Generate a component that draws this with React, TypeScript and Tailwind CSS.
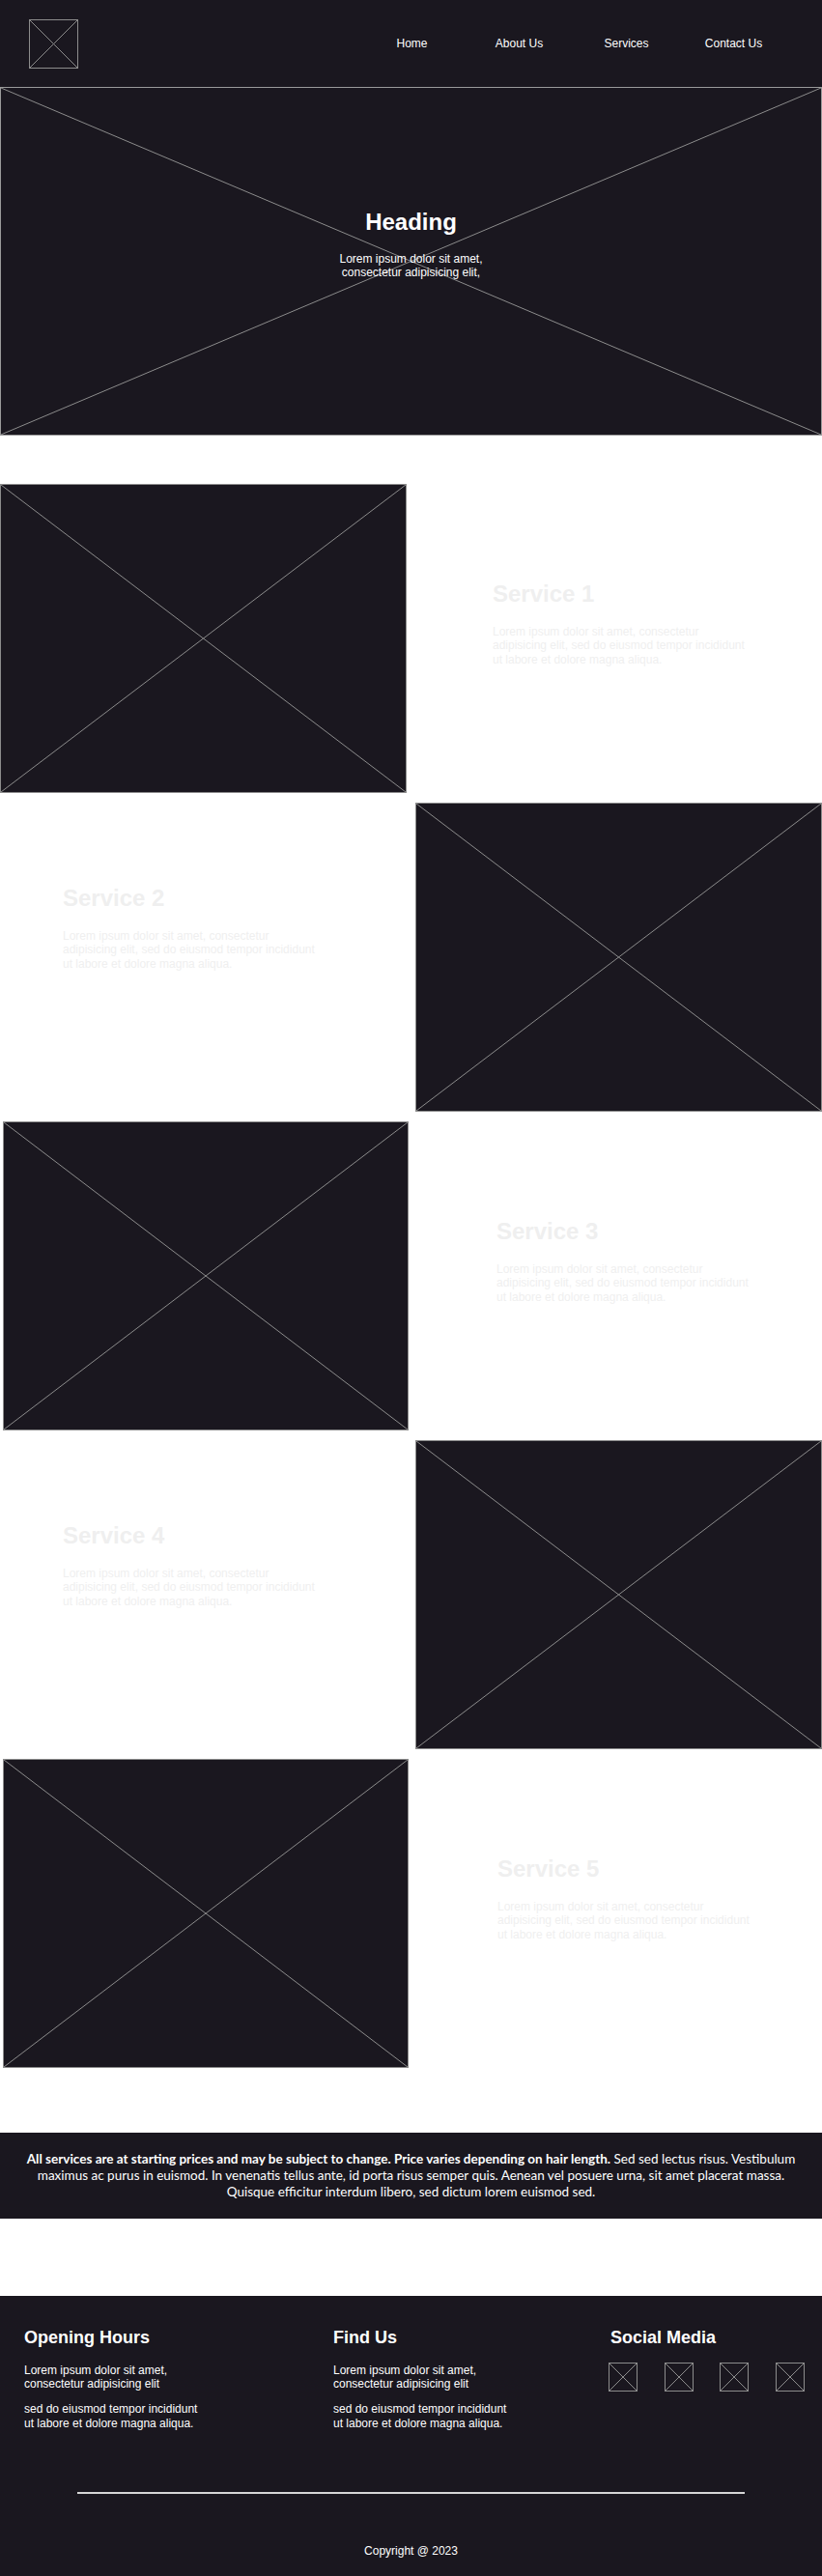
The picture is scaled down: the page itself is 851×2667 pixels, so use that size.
const services = [
  { title: "Service 1", side: "left", offset: "ml-0 w-[421px]", textPad: "pl-[89px] pt-[100px]" },
  { title: "Service 2", side: "right", offset: "w-[421px]", textPad: "pl-[65px] pt-[85px]" },
  { title: "Service 3", side: "left", offset: "ml-[3px] w-[420px]", textPad: "pl-[91px] pt-[100px]" },
  { title: "Service 4", side: "right", offset: "w-[421px]", textPad: "pl-[65px] pt-[85px]" },
  { title: "Service 5", side: "left", offset: "ml-[3px] w-[420px]", textPad: "pl-[92px] pt-[100px]" },
];

function Cross({ color = "#8c8c8c" }: { color?: string }) {
  return (
    <svg
      className="absolute inset-0 h-full w-full"
      viewBox="0 0 100 100"
      preserveAspectRatio="none"
    >
      <line x1="0" y1="0" x2="100" y2="100" stroke={color} strokeWidth="1" vectorEffect="non-scaling-stroke" />
      <line x1="100" y1="0" x2="0" y2="100" stroke={color} strokeWidth="1" vectorEffect="non-scaling-stroke" />
    </svg>
  );
}

function Placeholder({ className = "" }: { className?: string }) {
  return (
    <div className={"relative shrink-0 border border-[#8c8c8c] bg-[#1a171f] " + className}>
      <Cross />
    </div>
  );
}

function Header() {
  return (
    <div className="flex h-[90px] items-center justify-between bg-[#1a171f] pl-[30px] pr-[36px]">
      <Placeholder className="h-[51px] w-[51px]" />
      <nav className="flex text-[12px] text-white">
        <a className="w-[111px] text-center">Home</a>
        <a className="w-[111px] text-center">About Us</a>
        <a className="w-[111px] text-center">Services</a>
        <a className="w-[111px] text-center">Contact Us</a>
      </nav>
    </div>
  );
}

function Hero() {
  return (
    <div className="relative h-[361px] border border-[#9a9a9a] bg-[#1a171f]">
      <Cross />
      <div className="relative flex flex-col items-center pt-[125px] text-white">
        <h1 className="text-[24px] font-bold">Heading</h1>
        <p className="mt-[16px] text-center text-[12px]">
          Lorem ipsum dolor sit amet,
          <br />
          consectetur adipisicing elit,
        </p>
      </div>
    </div>
  );
}

function ServiceText({ title, pad }: { title: string; pad: string }) {
  return (
    <div className={"flex-1 " + pad}>
      <h2 className="text-[24px] font-bold text-[#efefef]">{title}</h2>
      <p className="mt-[17px] w-[268px] text-[12px] text-[#efefef]">
        Lorem ipsum dolor sit amet, consectetur adipisicing elit, sed do eiusmod tempor incididunt
        ut labore et dolore magna aliqua.
      </p>
    </div>
  );
}

function Services() {
  return (
    <div className="mt-[50px] flex flex-col gap-[10px]">
      {services.map((s) =>
        s.side === "left" ? (
          <div key={s.title} className="flex h-[320px]">
            <Placeholder className={"h-[320px] " + s.offset} />
            <ServiceText title={s.title} pad={s.textPad} />
          </div>
        ) : (
          <div key={s.title} className="flex h-[320px]">
            <ServiceText title={s.title} pad={s.textPad} />
            <Placeholder className={"h-[320px] " + s.offset} />
          </div>
        )
      )}
    </div>
  );
}

function Notice() {
  return (
    <div className="mt-[67px] flex h-[89px] items-center justify-center bg-[#1a171f] px-[24px]">
      <p className="text-center font-['Lato',sans-serif] text-[13.5px] leading-[17.3px] text-white">
        <b>
          All services are at starting prices and may be subject to change. Price varies depending on
          hair length.
        </b>{" "}
        Sed sed lectus risus. Vestibulum maximus ac purus in euismod. In venenatis tellus ante, id
        porta risus semper quis. Aenean vel posuere urna, sit amet placerat massa. Quisque efficitur
        interdum libero, sed dictum lorem euismod sed.
      </p>
    </div>
  );
}

function FooterCol({ title, className }: { title: string; className: string }) {
  return (
    <div className={className}>
      <h3 className="text-[18px] font-bold">{title}</h3>
      <p className="mt-[15px] text-[12px]">
        Lorem ipsum dolor sit amet,
        <br />
        consectetur adipisicing elit
      </p>
      <p className="mt-[12px] text-[12px]">
        sed do eiusmod tempor incididunt
        <br />
        ut labore et dolore magna aliqua.
      </p>
    </div>
  );
}

function Footer() {
  return (
    <footer className="mt-[80px] flex h-[290px] flex-col bg-[#1a171f] pt-[33px] text-white">
      <div className="flex pl-[25px]">
        <FooterCol title="Opening Hours" className="w-[320px]" />
        <FooterCol title="Find Us" className="w-[287px]" />
        <div className="w-[201px]">
          <h3 className="text-[18px] font-bold">Social Media</h3>
          <div className="-ml-[2px] mt-[14px] flex justify-between">
            <Placeholder className="h-[30px] w-[30px]" />
            <Placeholder className="h-[30px] w-[30px]" />
            <Placeholder className="h-[30px] w-[30px]" />
            <Placeholder className="h-[30px] w-[30px]" />
          </div>
        </div>
      </div>
      <div className="mx-[80px] mt-[64px] h-[2px] shrink-0 bg-[#d6d6d6]" />
      <p className="mt-[52px] text-center text-[12px]">Copyright @ 2023</p>
    </footer>
  );
}

export default function App() {
  return (
    <div className="w-[851px] bg-white font-['Liberation_Sans',Arial,sans-serif] leading-[1.2]">
      <Header />
      <Hero />
      <Services />
      <Notice />
      <Footer />
    </div>
  );
}
